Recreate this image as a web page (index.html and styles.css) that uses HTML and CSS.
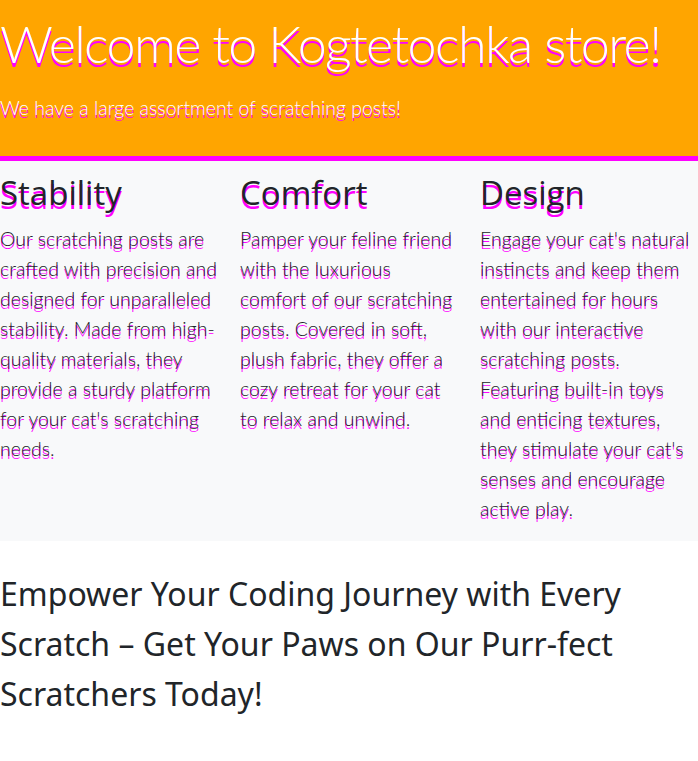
FILE: index.html
```html
<!DOCTYPE html>
<html lang="en">
<head>
<meta charset="utf-8">
<title>Kogtetochka store</title>
<link rel="stylesheet" href="styles.css">
</head>
<body>
<header class="hero">
  <h1 class="hero-title">Welcome to Kogtetochka store!</h1>
  <p class="hero-lead">We have a large assortment of scratching posts!</p>
</header>
<section class="features">
  <div class="feature">
    <h2 class="feature-title">Stability</h2>
    <p class="feature-text">Our scratching posts are crafted with precision and designed for unparalleled stability. Made from high-quality materials, they provide a sturdy platform for your cat's scratching needs.</p>
  </div>
  <div class="feature">
    <h2 class="feature-title">Comfort</h2>
    <p class="feature-text">Pamper your feline friend with the luxurious comfort of our scratching posts. Covered in soft, plush fabric, they offer a cozy retreat for your cat to relax and unwind.</p>
  </div>
  <div class="feature">
    <h2 class="feature-title">Design</h2>
    <p class="feature-text">Engage your cat's natural instincts and keep them entertained for hours with our interactive scratching posts. Featuring built-in toys and enticing textures, they stimulate your cat's senses and encourage active play.</p>
  </div>
</section>
<p class="slogan">Empower Your Coding Journey with Every Scratch – Get Your Paws on Our Purr-fect Scratchers Today!</p>
</body>
</html>
```
FILE: styles.css
```css
html, body {
  margin: 0;
  padding: 0;
  background: #ffffff;
  color: #212529;
}

.hero {
  background: #ffa500;
  border-bottom: 5px solid #ff00ff;
  padding: 12px 0 33px 0;
  color: #ffffff;
}

.hero-title {
  margin: 0;
  font-family: Lato, "Open Sans", sans-serif;
  font-weight: 300;
  font-size: 52px;
  line-height: 62px;
  letter-spacing: -1.6px;
  white-space: nowrap;
  text-shadow: 0 4px 0 #ff00ff;
}

.hero-lead {
  margin: 19px 0 0 0;
  font-family: Lato, "Open Sans", sans-serif;
  font-weight: 300;
  font-size: 19.5px;
  line-height: 30px;
  text-shadow: 0 3px 0 #ff00ff;
}

.features {
  background: #f8f9fa;
  display: grid;
  grid-template-columns: repeat(3, 218px);
  column-gap: 22px;
  padding: 13px 0 17px 0;
}

.feature-title {
  margin: 0 0 12px 0;
  font-family: "Open Sans", "Noto Sans", sans-serif;
  font-weight: 500;
  font-size: 33px;
  line-height: 38.4px;
  color: #212529;
  text-shadow: 0 4px 0 #ff00ff;
}

.feature-text {
  margin: 0;
  font-family: Lato, "Open Sans", sans-serif;
  font-weight: 300;
  font-size: 19.5px;
  line-height: 30px;
  color: #212529;
  text-shadow: 0 3px 0 #ff00ff;
}

.slogan {
  margin: 28px 0 0 0;
  font-family: "Noto Sans", "Open Sans", sans-serif;
  font-weight: 400;
  font-size: 32px;
  line-height: 50px;
  color: #212529;
}
```
